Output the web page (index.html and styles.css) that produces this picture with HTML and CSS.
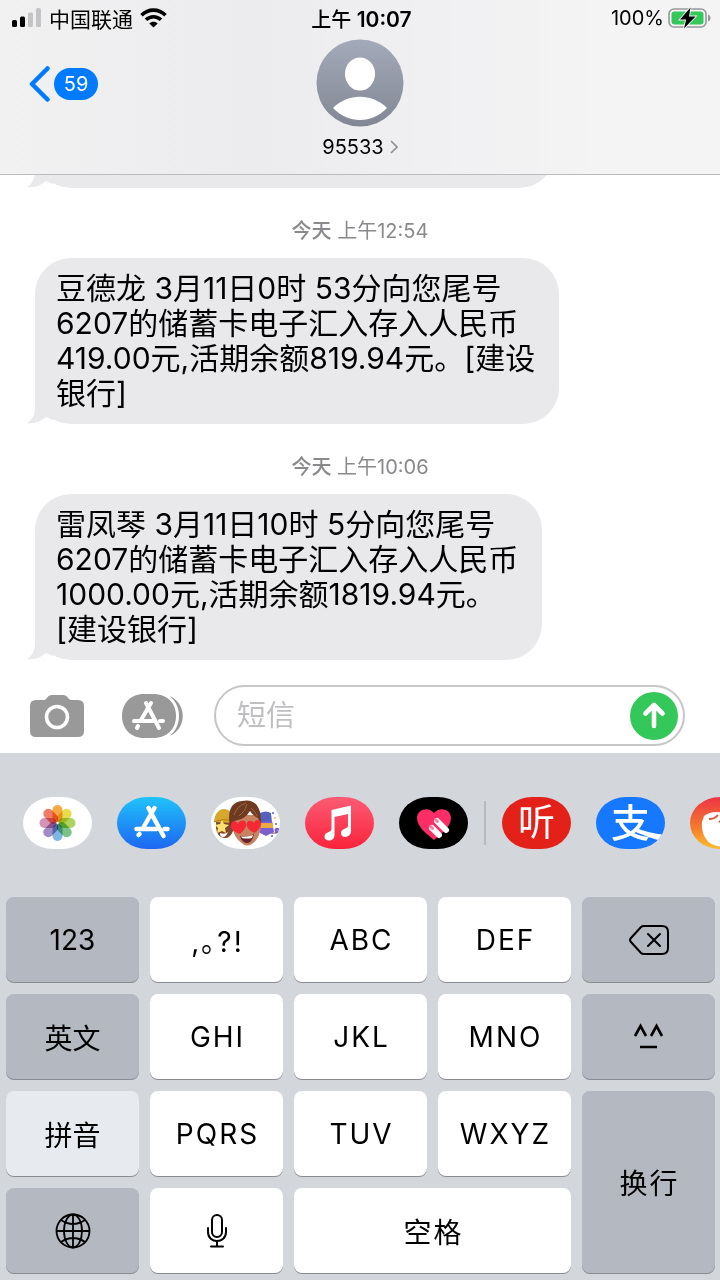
FILE: index.html
```html
<!DOCTYPE html>
<html lang="zh-CN">
<head>
    <meta charset="UTF-8">
    <meta name="viewport" content="width=device-width, initial-scale=1.0">
    <title>95533</title>
    <link rel="stylesheet" href="styles.css">
</head>
<body>
    <header class="header">
        <div class="status">
            <div class="status-left">
                <svg width="30" height="20" viewBox="0 0 30 20">
                    <rect x="0" y="12" width="5" height="7" rx="1.5"/>
                    <rect x="8" y="8.500" width="5" height="10.500" rx="1.5"/>
                    <rect x="16" y="4.500" width="5" height="14.500" rx="1.5" fill="#c4c4c6"/>
                    <rect x="24" y="0" width="5" height="19" rx="1.5" fill="#c4c4c6"/>
                </svg>
                <span>中国联通</span>
                <svg width="27" height="20" viewBox="0 0 27 20" fill="none" stroke="#000" stroke-width="3.6">
                    <path d="M1.5 7.2C8.4.4 18.6.4 25.500 7.200"/>
                    <path d="M6 11.800c4.300-4.100 10.700-4.100 15 0"/>
                    <path d="M13.500 19.500L9.300 15.500c2.500-2.200 5.900-2.200 8.400 0z" fill="#000" stroke="none"/>
                </svg>
            </div>
            <div class="status-time">上午 <b>10:07</b></div>
            <div class="status-right">
                <span>100%</span>
                <svg width="43" height="22" viewBox="0 0 43 22">
                    <rect x="1" y="2" width="37" height="18" rx="5" fill="none" stroke="#98989b" stroke-width="1.600"/>
                    <path d="M40 7.500c3.300 1 3.300 6 0 7z" fill="#98989b"/>
                    <rect x="3.500" y="4.500" width="32" height="13" rx="3" fill="#34c759"/>
                    <path d="M22.500.5L12 12.500h6.200L16 21.500 27.500 9.500H21z" fill="#000" stroke="#f4f4f5" stroke-width="1.800" paint-order="stroke"/>
                </svg>
            </div>
        </div>
        <nav class="contact">
            <button class="back" aria-label="返回">
                <svg width="22" height="38" viewBox="0 0 22 38"><path d="M19.500 3.500L4 19l15.500 15.500" fill="none" stroke="#007aff" stroke-width="4.500" stroke-linecap="round" stroke-linejoin="round"/></svg>
                <span class="badge">59</span>
            </button>
            <button class="person">
                <svg width="88" height="88" viewBox="0 0 88 88">
                    <defs>
                        <linearGradient id="avatar" x2="0" y2="1"><stop stop-color="#a3aab9"/><stop offset="1" stop-color="#838794"/></linearGradient>
                    </defs>
                    <circle cx="44" cy="44" r="43.500" fill="url(#avatar)"/>
                    <ellipse cx="44" cy="35" rx="15" ry="16.500" fill="#fff"/>
                    <path d="M17 69c15-15 39-15 54 0-15 16-39 16-54 0z" fill="#fff"/>
                </svg>
                <span class="name">95533
                    <svg width="8" height="14" viewBox="0 0 8 14"><path d="M1 1l6 6-6 6" fill="none" stroke="#8e8e93" stroke-width="1.600"/></svg>
                </span>
            </button>
        </nav>
    </header>

    <main class="messages">
        <div class="bubble previous">
            <svg class="tail" width="28" height="40" viewBox="0 0 28 40"><path d="M8 0v23c0 8-3 13-8 16 8 1 14-2 19-6l7 3V0z"/></svg>
        </div>
        <p class="stamp"><b>今天</b> 上午12:54</p>
        <div class="bubble">豆德龙 3月11日0时 53分向您尾号<br>6207的储蓄卡电子汇入存入人民币<br>419.00元,活期余额819.94元。[建设<br>银行]
            <svg class="tail" width="28" height="40" viewBox="0 0 28 40"><path d="M8 0v23c0 8-3 13-8 16 8 1 14-2 19-6l7 3V0z"/></svg>
        </div>
        <p class="stamp"><b>今天</b> 上午10:06</p>
        <div class="bubble">雷凤琴 3月11日10时 5分向您尾号<br>6207的储蓄卡电子汇入存入人民币<br>1000.00元,活期余额1819.94元。<br>[建设银行]
            <svg class="tail" width="28" height="40" viewBox="0 0 28 40"><path d="M8 0v23c0 8-3 13-8 16 8 1 14-2 19-6l7 3V0z"/></svg>
        </div>
    </main>

    <form class="composer">
        <button type="button" aria-label="相机">
            <svg width="54" height="42" viewBox="0 0 54 42">
                <path d="M6 5h8c3 0 3-5 8-5h11c5 0 5 5 8 5h7q6 0 6 6v25q0 6-6 6H6q-6 0-6-6V11q0-6 6-6z" fill="#999"/>
                <circle cx="27" cy="22" r="10.500" fill="none" stroke="#fff" stroke-width="3.600"/>
            </svg>
        </button>
        <button type="button" class="apps-button" aria-label="应用">
            <svg width="62" height="44" viewBox="0 0 62 44">
                <path d="M22 0h9c15 0 23 10 23 22s-8 22-23 22h-9C8 44 0 34 0 22S8 0 22 0z" fill="#999"/>
                <path d="M48 2c17 8 17 32 0 40 12-11 12-29 0-40z" fill="#999"/>
                <g transform="translate(27 22)" fill="none" stroke="#fff" stroke-width="4" stroke-linecap="round">
                    <path d="M-3-13L10 12M2-13l-10 17M-15 5H4M11 5h3M-12 12l1-2"/>
                </g>
            </svg>
        </button>
        <div class="field">
            <input type="text" placeholder="短信" aria-label="短信">
            <button class="send" type="button" aria-label="发送">
                <svg width="48" height="48" viewBox="0 0 48 48"><circle cx="24" cy="24" r="24" fill="#34c759"/><path d="M24 34V14M15.500 21.500L24 13l8.500 8.500" fill="none" stroke="#fff" stroke-width="4.600" stroke-linecap="round" stroke-linejoin="round"/></svg>
            </button>
        </div>
    </form>

    <section class="keyboard">
        <div class="apps">
            <button class="app photos" aria-label="照片">
                <svg width="69" height="52" viewBox="-34.500 -26 69 52">
                    <g class="petals">
                        <rect x="-5" y="-18" width="10" height="17" rx="5" fill="#f6a02d"/>
                        <rect x="-5" y="-18" width="10" height="17" rx="5" fill="#e6d93a" transform="rotate(45)"/>
                        <rect x="-5" y="-18" width="10" height="17" rx="5" fill="#a5ce4c" transform="rotate(90)"/>
                        <rect x="-5" y="-18" width="10" height="17" rx="5" fill="#69bd78" transform="rotate(135)"/>
                        <rect x="-5" y="-18" width="10" height="17" rx="5" fill="#71afe0" transform="rotate(180)"/>
                        <rect x="-5" y="-18" width="10" height="17" rx="5" fill="#987fbd" transform="rotate(225)"/>
                        <rect x="-5" y="-18" width="10" height="17" rx="5" fill="#d086ae" transform="rotate(270)"/>
                        <rect x="-5" y="-18" width="10" height="17" rx="5" fill="#ef6c57" transform="rotate(315)"/>
                    </g>
                </svg>
            </button>
            <button class="app store" aria-label="App Store">
                <svg width="69" height="52" viewBox="-34.500 -26 69 52">
                    <g fill="none" stroke="#fff" stroke-width="4.500" stroke-linecap="round">
                        <path d="M-3-15L12 13M3-15L-9 6M-15 6H5M13 6h3M-13 12l1-1"/>
                    </g>
                </svg>
            </button>
            <button class="app memoji" aria-label="拟我表情">
                <svg width="69" height="52" viewBox="0 0 69 52">
                    <path d="M5 24h17v10q-3 8-9 7-7-1-8-10z" fill="#7c4931"/>
                    <path d="M3 25c1-17 18-17 20-2v3z" fill="#d5a72c"/>
                    <path d="M3 25q10-4 20-1" stroke="#ad7d17" fill="none"/>
                    <path d="M11 23l2 4 5 1-4 3 1 5-4-2-5 2 1-5-3-3 5-1z" fill="#ffe171"/>
                    <path d="M9 36q5 2 8-1-2 5-5 5t-3-4z" fill="#fff"/>
                    <path d="M49 16q6-3 11 0l1 10H49z" fill="#5360bd"/>
                    <path d="M49 25l12-1 2 11-8 4-6-3z" fill="#795fd0"/>
                    <path d="M50 26h12v5H50z" fill="#e9ab41"/>
                    <path d="M58 34c5 4 11 1 9-2-2-1-4 2-1 2" stroke="#795fd0" stroke-width="2" fill="none"/>
                    <g fill="#526bc7"><circle cx="62" cy="16" r="1"/><circle cx="65" cy="27" r="1"/><circle cx="61" cy="39" r="1"/></g>
                    <g fill="#f4bd41"><circle cx="64" cy="21" r="1"/><circle cx="63" cy="36" r="1"/></g>
                    <path d="M21 18H49c3 14-1 24-8 29q-5 3-9 0C24 42 20 34 21 18z" fill="#c78261"/>
                    <path d="M19 30C16 14 20 5 31 4c13-3 20 6 19 24l-3-7q-5-2-8-7-5 8-12 9-5 0-8 7z" fill="#6e3b21"/>
                    <path d="M23 18q3-9 12-12M28 19q7-5 8-12M40 11q5 4 6 8" stroke="#9c6544" fill="none"/>
                    <path d="M29 37c-6-2-10-5-9-10 1-4 6-3 7 0 1-4 7-5 8-1 1 5-3 8-6 11zM44 36c-5-2-9-5-8-10 1-3 5-3 7 0 1-4 6-4 7 0 0 4-3 7-6 10z" fill="#f52834"/>
                    <path d="M29 39q7 2 14-2-2 9-7 9-5 0-7-7z" fill="#63252a"/>
                    <path d="M30 39.500q6 1 12-1.500l-1 3q-5 1-10 0z" fill="#fff"/>
                </svg>
            </button>
            <button class="app music" aria-label="音乐">
                <svg width="69" height="52" viewBox="0 0 69 52">
                    <path d="M26.500 13L46 8.500V34c0 7-10 8-10 2 0-5 7-4 7-7V17l-13.500 3v18c0 7-10 7-10 2 0-6 7-4 7-8z" fill="#fff"/>
                </svg>
            </button>
            <button class="app touch" aria-label="Digital Touch">
                <svg width="69" height="52" viewBox="0 0 69 52">
                    <path d="M35 43C28 37 18 30 18 21c0-9 12-12 17-5 5-7 17-4 17 5 0 9-10 16-17 22z" fill="#fb2d67"/>
                    <g stroke="#fff" stroke-width="6" stroke-linecap="round"><path d="M38 24l9 9M33 31l7 7"/></g>
                    <path d="M36.500 22.500l2 2M31.500 29.500l2 2" stroke="#fb7da0" stroke-width="3" stroke-linecap="round"/>
                </svg>
            </button>
            <span class="divider"></span>
            <button class="app listen">听</button>
            <button class="app pay">支
                <svg class="swash" width="69" height="52" viewBox="0 0 69 52"><path d="M40 31q12 5 29 7l-4 6q-14-4-28-10z" fill="#fff"/></svg>
            </button>
            <button class="app last" aria-label="更多应用">
                <svg width="69" height="52" viewBox="0 0 69 52">
                    <path d="M14 19q8-6 20-3l16 3v18q-11 17-26 11c-9-3-13-13-12-23z" fill="#fff"/>
                    <path d="M19 22q6 0 9-4M29 24l5 4" stroke="#e75538" stroke-width="2" fill="none"/>
                </svg>
            </button>
        </div>
        <div class="keys">
            <button class="key dark plain">123</button>
            <button class="key">,&#65377;?!</button>
            <button class="key">ABC</button>
            <button class="key">DEF</button>
            <button class="key dark plain" aria-label="删除">
                <svg width="40" height="30" viewBox="0 0 40 30" fill="none" stroke="#000" stroke-width="2" stroke-linecap="round" stroke-linejoin="round"><path d="M15 1h18q6 0 6 6v16q0 6-6 6H15q-2 0-3-1L2 17q-2-2 0-4L12 2q1-1 3-1z"/><path d="M19 9l12 12M31 9L19 21"/></svg>
            </button>
            <button class="key dark plain">英文</button>
            <button class="key">GHI</button>
            <button class="key">JKL</button>
            <button class="key">MNO</button>
            <button class="key dark plain" aria-label="颜文字">
                <svg width="30" height="28" viewBox="0 0 30 28" fill="none" stroke="#000" stroke-width="2.600"><path d="M1 13L6.500 3l5.500 10M17 13l5.500-10L28 13M6 24h17"/></svg>
            </button>
            <button class="key light plain">拼音</button>
            <button class="key">PQRS</button>
            <button class="key">TUV</button>
            <button class="key">WXYZ</button>
            <button class="key dark enter">换行</button>
            <button class="key dark plain" aria-label="切换键盘">
                <svg width="36" height="36" viewBox="0 0 36 36" fill="none" stroke="#000" stroke-width="1.800"><circle cx="18" cy="18" r="16.500"/><ellipse cx="18" cy="18" rx="9" ry="16.500"/><path d="M18 1v34M1 18h34M6 7q12 8 24 0M6 29q12-8 24 0"/></svg>
            </button>
            <button class="key plain" aria-label="听写">
                <svg width="22" height="34" viewBox="0 0 22 34" fill="none" stroke="#000" stroke-width="2" stroke-linecap="round"><rect x="6" y="1" width="10" height="22" rx="5"/><path d="M2 14v4c0 12 18 12 18 0v-4M11 27v5M5 32.500h12"/></svg>
            </button>
            <button class="key space">空格</button>
        </div>
    </section>
</body>
</html>
```
FILE: styles.css
```css
* {
    box-sizing: border-box;
}
body {
    font-family: Inter, "Noto Sans CJK SC", sans-serif;
    background-color: #fff;
    color: #000;
    margin: 0;
    min-height: 100vh;
    display: flex;
    flex-direction: column;
    overflow-x: hidden;
}
button {
    padding: 0;
    border: none;
    background: none;
    color: #000;
    font-family: inherit;
    cursor: pointer;
}
svg {
    display: block;
    flex-shrink: 0;
}

/* header */
.header {
    background: linear-gradient(90deg, #f1f1f2, #ececee 35%, #f4f4f5 85%);
    border-bottom: 1px solid #bcbcbf;
    padding-bottom: 14px;
}
.status {
    display: grid;
    grid-template-columns: 1fr auto 1fr;
    align-items: center;
    height: 36px;
    padding: 0 9px 0 12px;
    font-size: 20px;
}
.status-left,
.status-right {
    display: flex;
    align-items: center;
    gap: 7px;
}
.status-right {
    justify-content: flex-end;
    gap: 4px;
}
.status-left span {
    font-size: 21px;
}
.status-time {
    font-weight: 500;
}
.status-time b {
    font-size: 21px;
    font-weight: 600;
}
.contact {
    display: grid;
    grid-template-columns: 1fr auto 1fr;
    padding: 3px 28px 0;
}
.back {
    display: flex;
    align-items: center;
    gap: 4px;
    height: 90px;
    justify-self: start;
}
.badge {
    background-color: #007aff;
    color: #fff;
    border-radius: 16px;
    width: 44px;
    font-size: 20px;
    line-height: 32px;
}
.person {
    display: flex;
    flex-direction: column;
    align-items: center;
    gap: 7px;
}
.name {
    display: flex;
    align-items: center;
    gap: 6px;
    font-size: 20px;
    line-height: 26px;
}

/* messages */
.messages {
    flex: 1;
    overflow: hidden;
    padding: 0 35px 25px;
}
.bubble {
    position: relative;
    width: fit-content;
    padding: 13px 24px 13px 21px;
    background-color: #e9e9eb;
    border-radius: 36px;
    font-size: 30px;
    line-height: 35px;
    white-space: nowrap;
}
.previous {
    width: 80%;
    height: 90px;
    margin-top: -77px;
}
.tail {
    position: absolute;
    left: -8px;
    bottom: 0;
    fill: #e9e9eb;
}
.stamp {
    margin: 29px 0 13px;
    color: #8a8a8e;
    font-size: 20px;
    line-height: 28px;
    text-align: center;
}
.stamp b {
    font-weight: 500;
}

/* text field row */
.composer {
    display: flex;
    align-items: center;
    padding: 0 35px 7px 30px;
}
.apps-button {
    margin: 0 30px 0 38px;
}
.field {
    flex: 1;
    min-width: 0;
    display: flex;
    align-items: center;
    height: 61px;
    padding: 0 5px 0 21px;
    border: 2px solid #c6c6c8;
    border-radius: 31px;
}
.field input {
    flex: 1;
    min-width: 0;
    border: none;
    outline: none;
    padding: 0;
    background: none;
    font-family: inherit;
    font-size: 29px;
}
.field input::placeholder {
    color: #bfbfc3;
}

/* keyboard */
.keyboard {
    background-color: #d3d6db;
    padding: 44px 5px 7px 6px;
}
.apps {
    display: flex;
    align-items: center;
    gap: 25px;
    margin: 0 -5px 48px 17px;
    overflow: hidden;
}
.app {
    position: relative;
    flex: 0 0 69px;
    height: 52px;
    border-radius: 30px / 26px;
    overflow: hidden;
    color: #fff;
    text-align: center;
}
.photos,
.memoji {
    background-color: #fff;
}
.petals rect {
    mix-blend-mode: multiply;
    opacity: 0.9;
}
.store {
    background: linear-gradient(#1fc3fb, #1d66f1);
}
.music {
    background: linear-gradient(#fb5c74, #fa233b);
}
.touch {
    background-color: #000;
}
.divider {
    flex-shrink: 0;
    width: 2px;
    height: 44px;
    margin: 0 -9px;
    background-color: #b8babf;
}
.listen {
    background-color: #e32119;
    font-size: 37px;
    line-height: 50px;
}
.pay {
    background-color: #1677ff;
    font-size: 39px;
    font-weight: 500;
    line-height: 50px;
}
.swash {
    position: absolute;
    left: 0;
    top: 0;
}
.last {
    background: linear-gradient(#ec3447, #f67b2c 60%, #fbc02d);
}
.keys {
    display: grid;
    grid-template-columns: repeat(5, 1fr);
    grid-auto-rows: 85px;
    gap: 12px 11px;
}
.key {
    display: flex;
    align-items: center;
    justify-content: center;
    padding-left: 2px;
    background-color: #fff;
    border-radius: 8px;
    box-shadow: 0 1px 0 #898b8f;
    font-size: 28px;
    letter-spacing: 2px;
}
.plain {
    padding-left: 0;
    letter-spacing: normal;
}
.dark {
    background-color: #b3b8c1;
}
.light {
    background-color: #e7ebf0;
}
.enter {
    grid-row: span 2;
}
.space {
    grid-column: span 2;
}
```
